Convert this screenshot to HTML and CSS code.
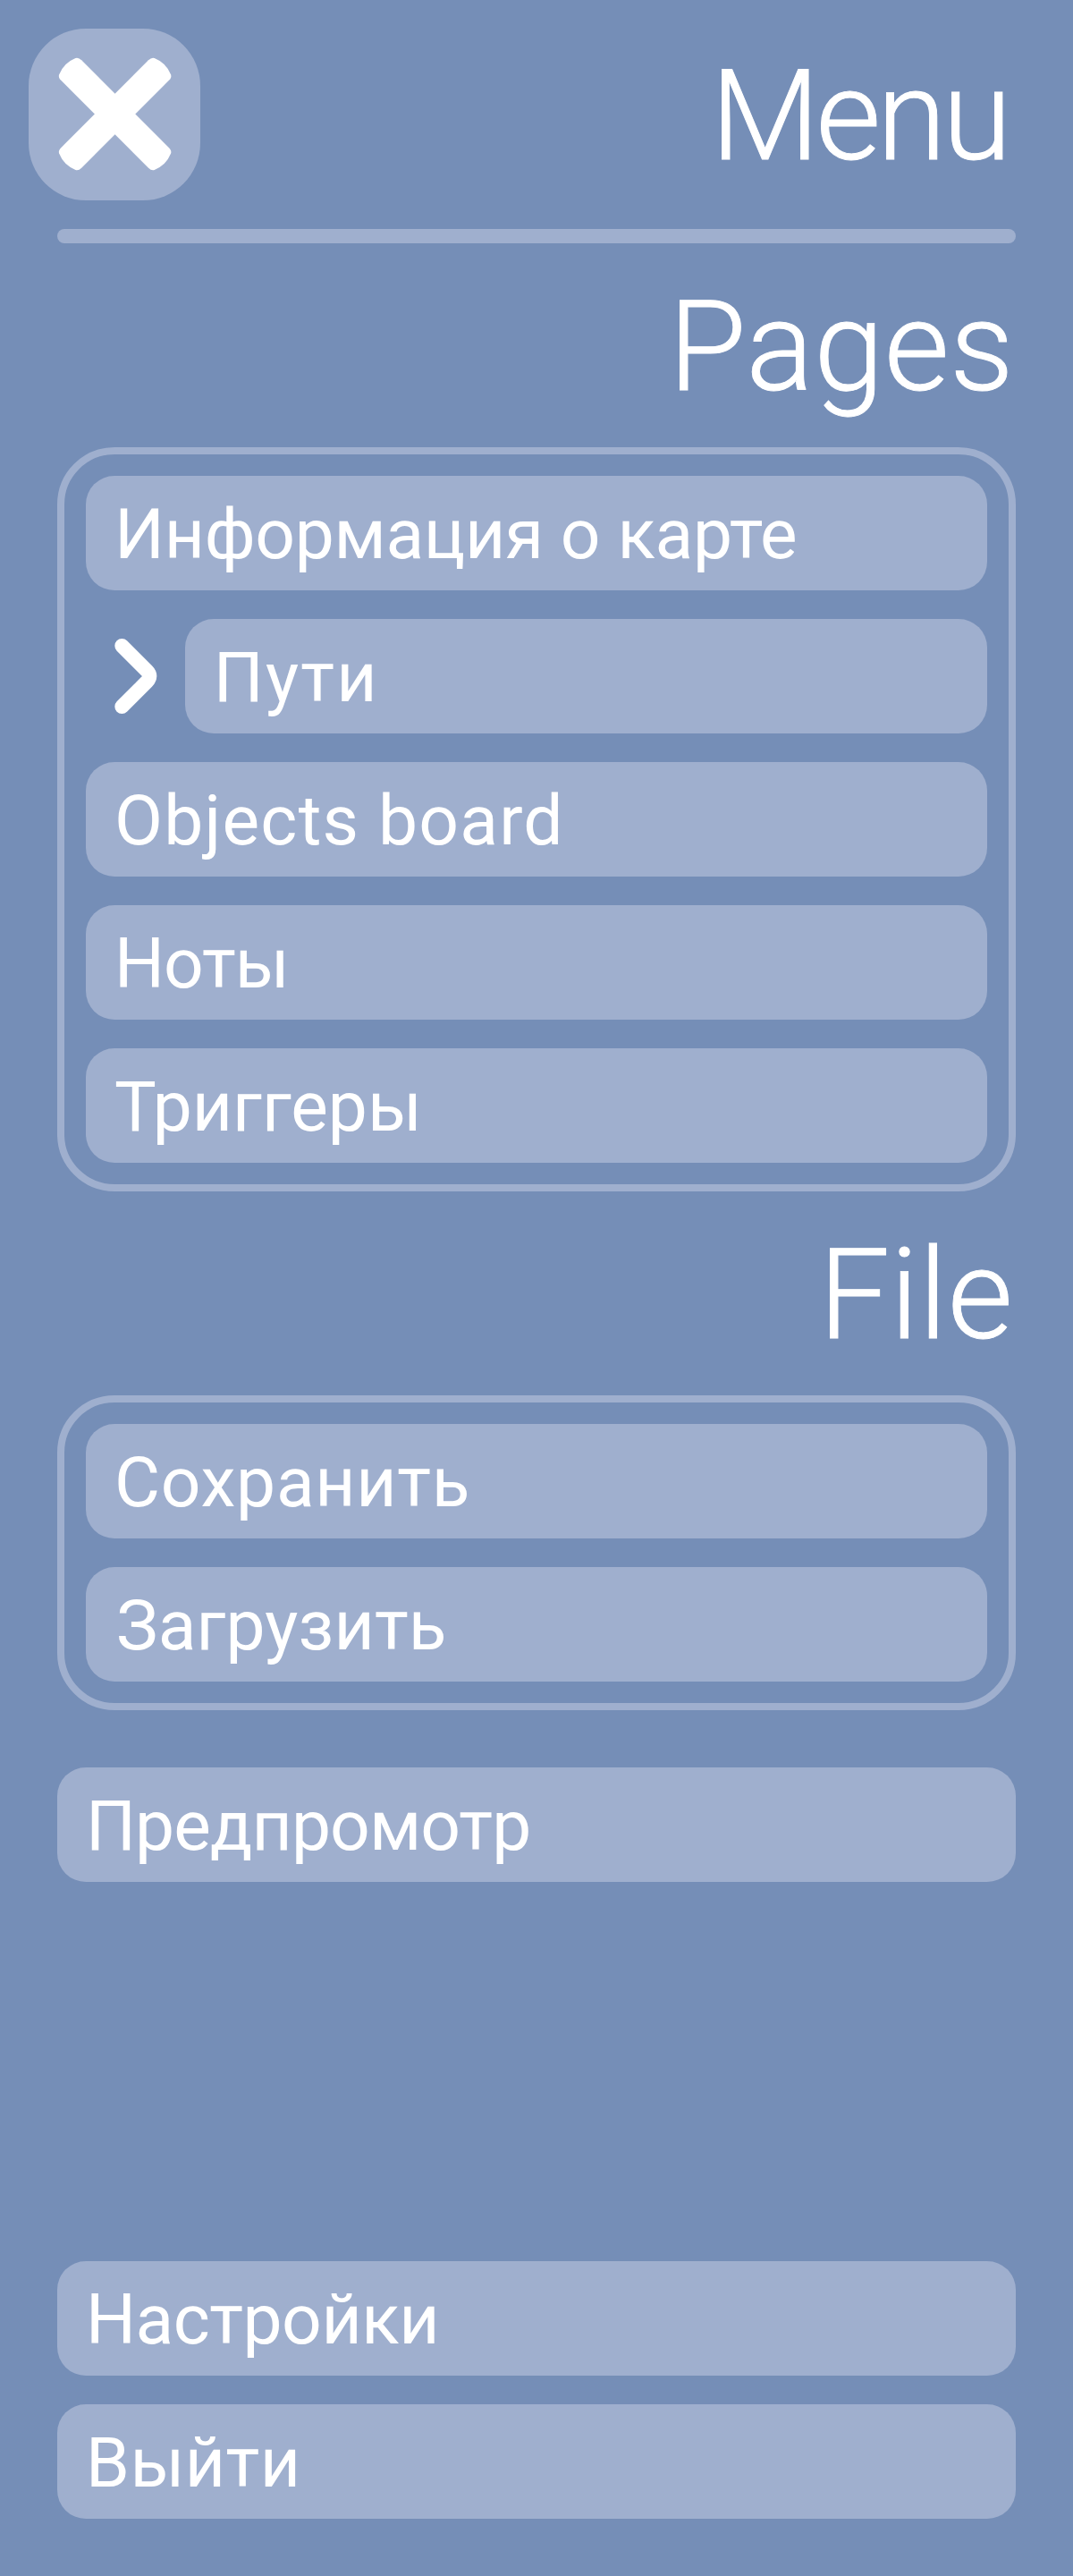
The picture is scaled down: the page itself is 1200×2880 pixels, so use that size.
FILE: index.html
```html
<!DOCTYPE html>
<html lang="ru">
<head>
<meta charset="utf-8">
<title>Menu</title>
<link rel="stylesheet" href="styles.css">
</head>
<body>
<main class="menu">
  <header class="menu-header">
    <button class="close" aria-label="Close">
      <svg viewBox="-96 -96 192 192" aria-hidden="true">
        <g transform="translate(.6 -.5)">
          <path id="bar" transform="rotate(45)" d="M-69-16.1H69Q74-16.1 75.4-13Q81 0 75.4 13Q74 16.1 69 16.1H-69Q-74 16.1-75.4 13Q-81 0-75.4-13Q-74-16.1-69-16.1Z"/>
          <use href="#bar" transform="rotate(90)"/>
        </g>
      </svg>
    </button>
    <h1 class="heading heading-menu">Menu</h1>
  </header>
  <hr class="divider">

  <h2 class="heading heading-pages">Pages</h2>
  <nav class="group">
    <button class="item t-info">Информация о карте</button>
    <div class="selected">
      <svg class="chevron" viewBox="0 0 110 128" aria-hidden="true">
        <path d="M40 30L68 58Q74 64 68 70L40 98"/>
      </svg>
      <button class="item t-paths">Пути</button>
    </div>
    <button class="item t-objects">Objects board</button>
    <button class="item t-notes">Ноты</button>
    <button class="item t-triggers">Триггеры</button>
  </nav>

  <h2 class="heading heading-file">File</h2>
  <div class="group">
    <button class="item t-save">Сохранить</button>
    <button class="item t-load">Загрузить</button>
  </div>

  <div class="actions">
    <button class="item t-preview">Предпромотр</button>
  </div>
  <footer class="actions actions-bottom">
    <button class="item t-settings">Настройки</button>
    <button class="item t-exit">Выйти</button>
  </footer>
</main>
</body>
</html>
```
FILE: styles.css
```css
* { box-sizing: border-box; }

body {
  margin: 0;
  background: #758eb7;
  color: #fff;
  font-family: Roboto, "Liberation Sans", sans-serif;
}

button {
  border: 0;
  color: inherit;
  font-family: inherit;
}

.menu {
  display: flex;
  flex-direction: column;
  height: 2880px;
  padding: 0 64px 64px;
}

.menu-header {
  display: flex;
  justify-content: space-between;
  align-items: flex-start;
  height: 256px;
}

.close {
  width: 192px;
  height: 192px;
  margin: 32px 0 0 -32px;
  padding: 0;
  border-radius: 64px;
  background: #9fafce;
}

.close svg {
  display: block;
  width: 192px;
  height: 192px;
  fill: #fff;
}

.divider {
  width: 100%;
  height: 16px;
  margin: 0;
  border: 0;
  border-radius: 8px;
  background: #9fafce;
}

.heading {
  height: 228px;
  margin: 0;
  font-size: 141px;
  font-weight: 300;
  line-height: 231px;
  text-align: right;
  -webkit-text-stroke: .9px #fff;
}

.heading-menu { padding-right: 9px; line-height: 259px; letter-spacing: -4.4px; }
.heading-pages { padding-right: 2px; letter-spacing: .4px; }
.heading-file { padding-right: 3px; letter-spacing: .4px; }

.group {
  display: flex;
  flex-direction: column;
  gap: 32px;
  padding: 24px;
  border: 8px solid #9fafce;
  border-radius: 64px;
}

.selected { display: flex; }

.chevron {
  flex: none;
  width: 110.67px;
  height: 128px;
  fill: none;
  stroke: #fff;
  stroke-width: 16;
  stroke-linecap: round;
}

.item {
  flex: none;
  width: 100%;
  height: 128px;
  padding: 2px 32px 0;
  border-radius: 32px;
  background: #9fafce;
  font-size: 78.5px;
  font-weight: 400;
  line-height: 126px;
  text-align: left;
  white-space: nowrap;
}

.selected .item {
  flex: 1;
  width: auto;
}

.t-info { letter-spacing: -.32px; }
.t-paths { letter-spacing: 2.27px; }
.t-objects { letter-spacing: 1.22px; }
.t-notes { letter-spacing: -1px; }
.t-save { letter-spacing: .7px; }
.t-load { padding-left: 34px; letter-spacing: .1px; }
.t-preview { letter-spacing: -.9px; }
.t-settings { letter-spacing: -.5px; }
.t-exit { letter-spacing: .47px; }

.actions {
  display: flex;
  flex-direction: column;
  gap: 32px;
  margin-top: 64px;
}

.actions-bottom { margin-top: auto; }
```
